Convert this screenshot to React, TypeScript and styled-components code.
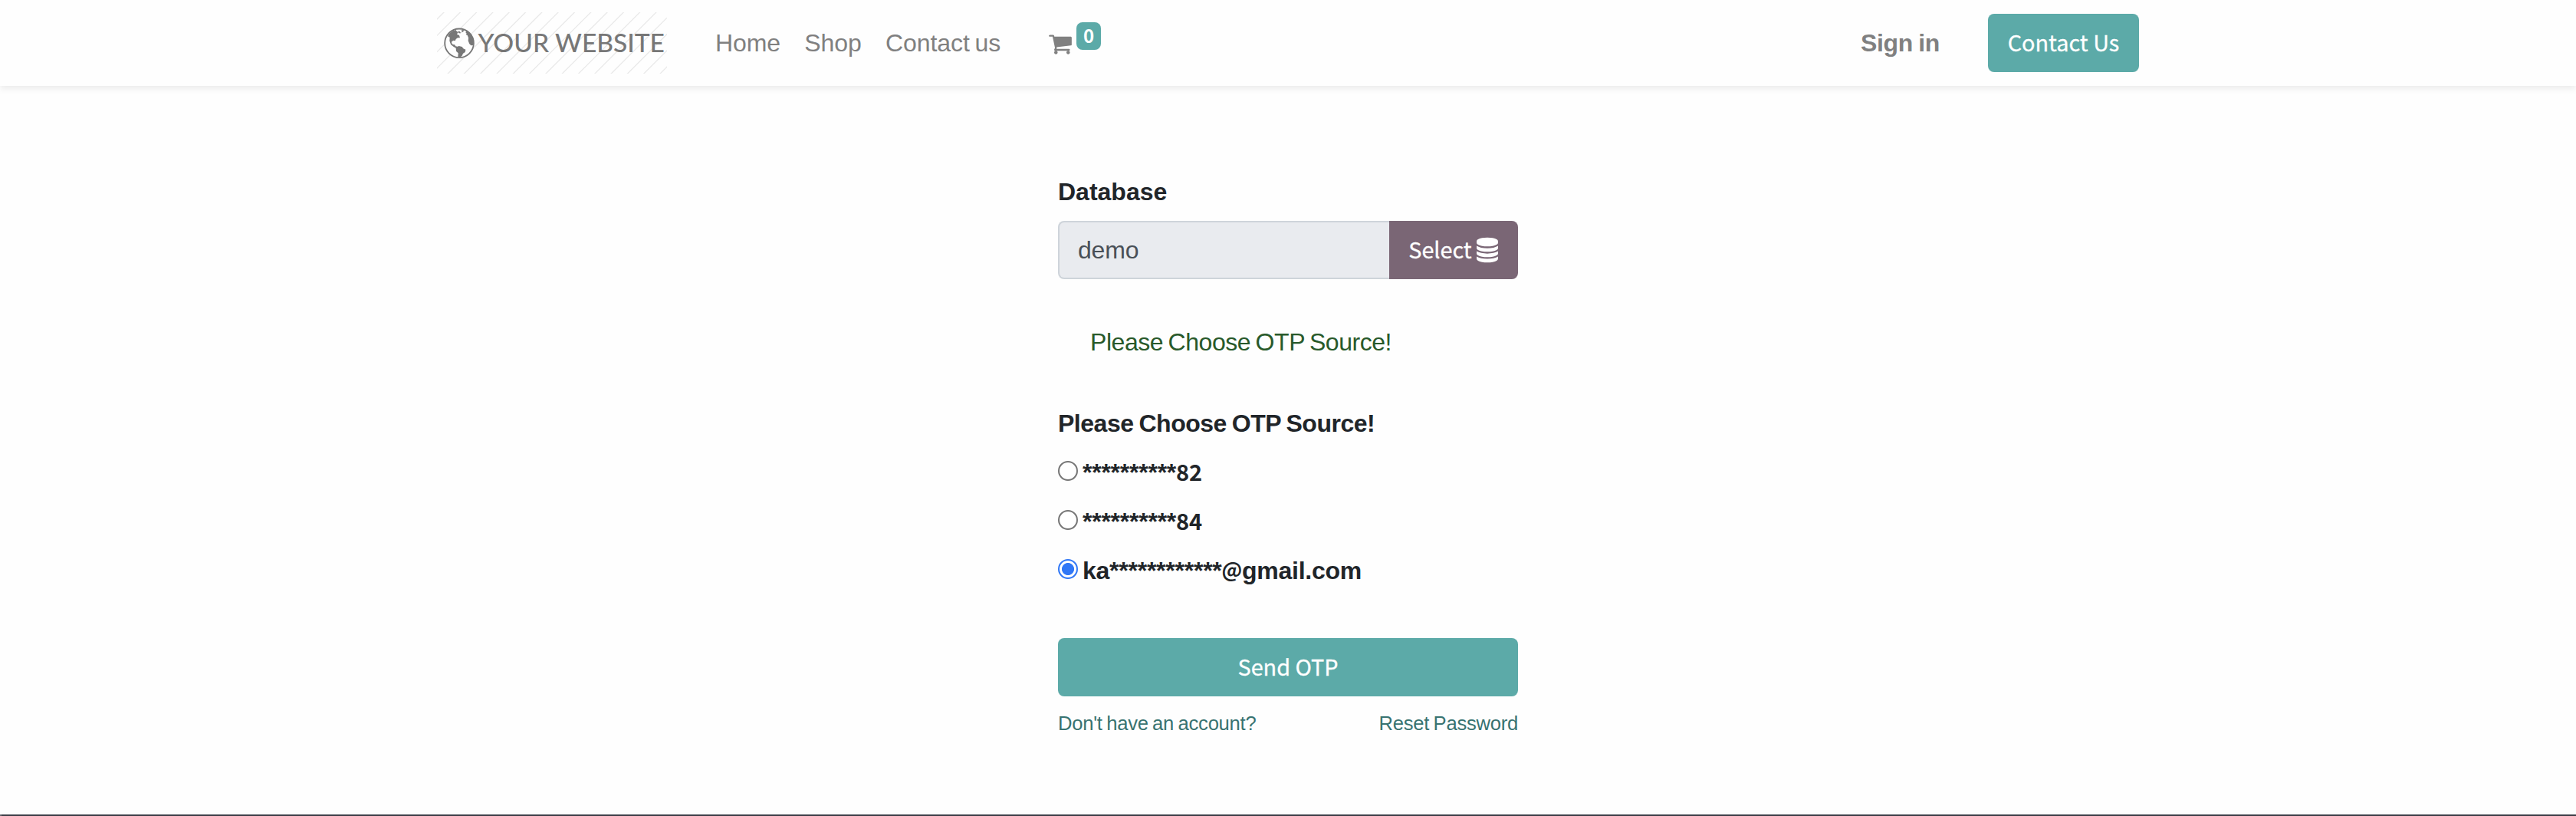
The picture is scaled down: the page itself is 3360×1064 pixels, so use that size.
import React, { useState } from 'react';
import styled, { createGlobalStyle } from 'styled-components';

const teal = '#5caaa8';
const sans = '"Liberation Sans", Arial, sans-serif';
const humanist = '"Noto Sans CJK SC", "Noto Sans", sans-serif';

const GlobalStyle = createGlobalStyle`
  * { box-sizing: border-box; }
  body {
    margin: 0;
    background: #fefefe;
    font-family: ${sans};
    font-size: 32px;
    line-height: 48px;
    color: #212529;
  }
`;

const Page = styled.div`
  display: flex;
  flex-direction: column;
  height: 1064px;
  overflow: hidden;
`;

const Header = styled.header`
  flex: none;
  display: flex;
  justify-content: center;
  height: 112px;
  background: #fefefe;
  box-shadow: 0 4px 8px rgba(0, 0, 0, 0.075);
`;

const HeaderInner = styled.div`
  display: flex;
  align-items: center;
  width: 2220px;
`;

const Logo = styled.svg`
  display: block;
  width: 300px;
  height: 80px;
  margin-right: 63px;
`;

const Nav = styled.nav`
  display: flex;
  gap: 31.4px;
`;

const NavLink = styled.a<{ $bold?: boolean }>`
  color: #808080;
  white-space: nowrap;
  font-weight: ${(p) => (p.$bold ? 700 : 400)};
  letter-spacing: ${(p) => (p.$bold ? '-0.35px' : '-0.1px')};
  word-spacing: ${(p) => (p.$bold ? '-1.2px' : '-2px')};
`;

const Cart = styled.a`
  display: flex;
  align-items: flex-start;
  margin-left: 62px;
  height: 54px;
  color: #808080;
`;

const CartIcon = styled.svg`
  width: 32px;
  height: 32px;
  margin-top: 12px;
  fill: currentColor;
`;

const Badge = styled.span`
  width: 32px;
  height: 36px;
  margin-left: 5px;
  border-radius: 8px;
  background: ${teal};
  color: #fff;
  font: 700 24px/34px ${humanist};
  text-align: center;
`;

const Spacer = styled.div`
  flex: 1;
`;

const Button = styled.button<{ $width: number }>`
  display: flex;
  align-items: center;
  justify-content: center;
  gap: 5px;
  width: ${(p) => p.$width}px;
  height: 76px;
  padding: 0 0 2px;
  border: 0;
  border-radius: 8px;
  background: ${teal};
  color: #fff;
  font: 400 28.8px/48px ${humanist};
  -webkit-text-stroke: 0.3px #fff;
`;

const ContactButton = styled(Button)`
  margin-left: 63px;
`;

const SelectButton = styled(Button)`
  border-radius: 0 8px 8px 0;
  background: #7a6675;
`;

const DatabaseIcon = styled.svg`
  width: 30px;
  height: 34px;
  margin-top: 2px;
  fill: #fff;
`;

const Main = styled.main`
  flex: 1;
  display: flex;
  justify-content: center;
  padding-top: 114px;
`;

const Form = styled.form`
  width: 600px;
`;

const Label = styled.div`
  font-weight: 700;
  white-space: nowrap;
`;

const InputGroup = styled.div`
  display: flex;
  margin-top: 14px;
`;

const Input = styled.input`
  width: 432px;
  height: 76px;
  padding: 0 24px;
  border: 2px solid #ced4da;
  border-right: 0;
  border-radius: 8px 0 0 8px;
  background: #e9ebef;
  color: #495057;
  font: 32px/48px ${sans};
  letter-spacing: -0.2px;
  outline: none;
`;

const Notice = styled.p`
  margin: 58px 0 58px;
  padding: 0 42px;
  color: #28592a;
  white-space: nowrap;
  letter-spacing: -0.45px;
  word-spacing: -2px;
`;

const Question = styled(Label)`
  letter-spacing: -0.48px;
  word-spacing: -1.5px;
`;

const Options = styled.div`
  display: flex;
  flex-direction: column;
  gap: 16px;
  margin-top: 16px;
`;

const Option = styled.label`
  display: flex;
  align-items: center;
  height: 48px;
  font-weight: 700;
  white-space: nowrap;
  letter-spacing: -0.25px;
`;

const Radio = styled.input`
  appearance: none;
  flex: none;
  width: 26px;
  height: 26px;
  margin: 0 6px 4px 0;
  border: 2px solid #767676;
  border-radius: 50%;
  background: #fff;
  &:checked {
    border-color: #3077f6;
    background: radial-gradient(circle, #3077f6 7.6px, #fff 8.4px);
  }
`;

const Symbol = styled.span<{ $size?: number; $lift?: number }>`
  font-family: ${humanist};
  font-size: ${(p) => p.$size ?? 29}px;
  line-height: 1;
  vertical-align: ${(p) => p.$lift ?? 0.5}px;
`;

const Submit = styled(Button)`
  margin-top: 64px;
`;

const Links = styled.div`
  display: flex;
  justify-content: space-between;
  margin-top: 16px;
  font-size: 25.6px;
  line-height: 38px;
  letter-spacing: -0.25px;
  word-spacing: -1.4px;
`;

const TextLink = styled.a`
  color: #387371;
  white-space: nowrap;
`;

const FooterEdge = styled.footer`
  flex: none;
  height: 2px;
  border-left: 2px solid #66686f;
  background: #3b3d46;
`;

/* Diagonal hatch behind the wordmark: one line every 21.3 units. */
const hatch = Array.from({ length: 18 }, (_, i) => 9 + i * 21.3);

function WebsiteLogo() {
  return (
    <Logo viewBox="0 0 300 80">
      <g stroke="#e9e9e9" strokeWidth="1.3">
        {hatch.map((x) => (
          <line key={x} x1={x + 2} y1={-2} x2={x - 82} y2={82} />
        ))}
      </g>
      <g fill="#777" transform="translate(-10 -16) scale(.33333)">
        <circle cx="117" cy="169" r="56.5" fill="#fefefe" stroke="#777" strokeWidth="5.5" />
        <path d="M72 142 80 130 92 121 104 117 106 121 111 125 117 121 121 126 126 127 128 121 124 117 136 118 132 125 122 126 121 131 112 127 108 134 117 138 120 148 111 148 104 153 101 160 95 158 88 162 87 168 92 174 99 175 103 181 110 182 116 180 128 183 133 190 142 194 140 204 132 209 128 218 121 224 112 222 113 208 105 200 104 188 94 182 84 174 79 160 80 146Z" />
        <path d="M147 121 142 127 146 131 143 135 149 138 153 148 152 160 157 172 163 178 171 177 175 160 166 136Z" />
      </g>
      <text x="53.5" y="52" fill="#777" fontFamily="Lato" fontSize="33.5" fontWeight="500">
        YOUR WEBSITE
      </text>
    </Logo>
  );
}

export default function App() {
  const [source, setSource] = useState('mail');
  const options = [
    { id: 'p1', text: <>**********<Symbol>82</Symbol></> },
    { id: 'p2', text: <>**********<Symbol>84</Symbol></> },
    { id: 'mail', text: <>ka************<Symbol $size={26.5} $lift={2}>@</Symbol>gmail.com</> },
  ];
  return (
    <Page>
      <GlobalStyle />
      <Header>
        <HeaderInner>
          <WebsiteLogo />
          <Nav>
            <NavLink>Home</NavLink>
            <NavLink>Shop</NavLink>
            <NavLink>Contact us</NavLink>
          </Nav>
          <Cart>
            <CartIcon viewBox="0 0 1792 1792">
              <path d="M704 1536q0 52-38 90t-90 38-90-38-38-90 38-90 90-38 90 38 38 90zm896 0q0 52-38 90t-90 38-90-38-38-90 38-90 90-38 90 38 38 90zm128-1088v512q0 24-16.5 42.5t-40.5 21.5l-1044 122q13 60 13 70 0 16-24 64h920q26 0 45 19t19 45-19 45-45 19h-1024q-26 0-45-19t-19-45q0-11 8-31.5t16-36 21.5-40 15.5-29.5l-177-823h-204q-26 0-45-19t-19-45 19-45 45-19h256q16 0 28.5 6.5t19.5 15.5 13 24.5 8 26 5.5 29.5 4.5 26h1201q26 0 45 19t19 45z" />
            </CartIcon>
            <Badge>0</Badge>
          </Cart>
          <Spacer />
          <NavLink $bold>Sign in</NavLink>
          <ContactButton $width={197}>Contact Us</ContactButton>
        </HeaderInner>
      </Header>
      <Main>
        <Form onSubmit={(e) => e.preventDefault()}>
          <Label>Database</Label>
          <InputGroup>
            <Input value="demo" readOnly />
            <SelectButton $width={168} type="button">
              Select
              <DatabaseIcon viewBox="70 0 1652 1792">
                <path d="M896 768q237 0 443-43t325-127v170q0 69-103 128t-280 93.5-385 34.5-385-34.5-280-93.5-103-128v-170q119 84 325 127t443 43zm0 768q237 0 443-43t325-127v170q0 69-103 128t-280 93.5-385 34.5-385-34.5-280-93.5-103-128v-170q119 84 325 127t443 43zm0-384q237 0 443-43t325-127v170q0 69-103 128t-280 93.5-385 34.5-385-34.5-280-93.5-103-128v-170q119 84 325 127t443 43zm0-1152q208 0 385 34.5t280 93.5 103 128v128q0 69-103 128t-280 93.5-385 34.5-385-34.5-280-93.5-103-128v-128q0-69 103-128t280-93.5 385-34.5z" />
              </DatabaseIcon>
            </SelectButton>
          </InputGroup>
          <Notice>Please Choose OTP Source!</Notice>
          <Question>Please Choose OTP Source!</Question>
          <Options>
            {options.map((o) => (
              <Option key={o.id}>
                <Radio type="radio" name="source" checked={source === o.id} onChange={() => setSource(o.id)} />
                <span>{o.text}</span>
              </Option>
            ))}
          </Options>
          <Submit $width={600} type="submit">Send OTP</Submit>
          <Links>
            <TextLink>Don't have an account?</TextLink>
            <TextLink>Reset Password</TextLink>
          </Links>
        </Form>
      </Main>
      <FooterEdge />
    </Page>
  );
}
